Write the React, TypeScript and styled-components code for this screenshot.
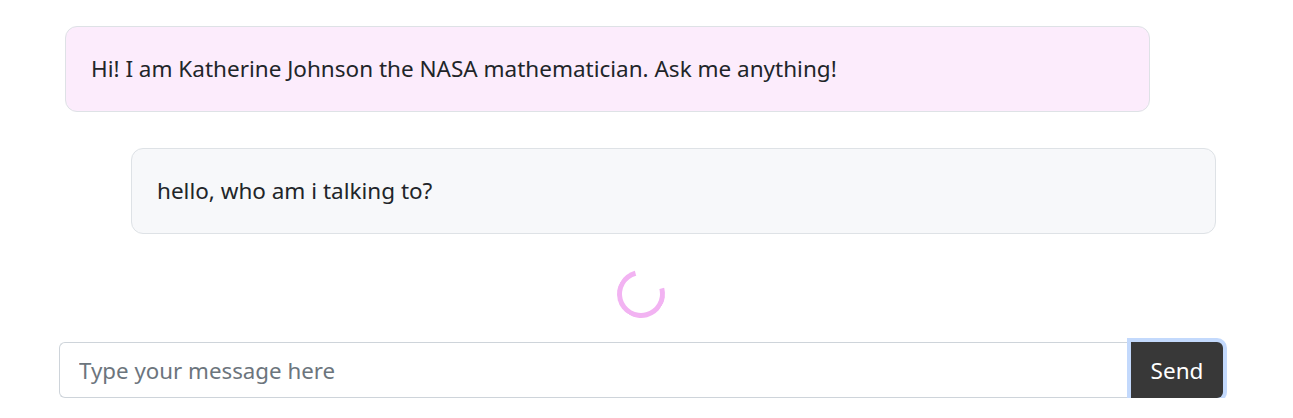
import React from 'react';
import styled, { createGlobalStyle } from 'styled-components';

const GlobalStyle = createGlobalStyle`
  body {
    margin: 0;
    background: #fff;
    font-family: "Noto Sans", "Open Sans", sans-serif;
    color: #212529;
  }
`;

const Page = styled.div`
  width: 1164px;
  margin-left: 59px;
  padding-top: 26px;
  display: flex;
  flex-direction: column;
`;

const Bubble = styled.div<{ $user?: boolean }>`
  width: 1085px;
  box-sizing: border-box;
  margin-left: ${p => (p.$user ? '72px' : '6px')};
  margin-bottom: 36px;
  padding: 25px 25px 25px;
  font-size: 22.5px;
  line-height: 34px;
  border: 1px solid #dee2e6;
  border-radius: 12px;
  background: ${p => (p.$user ? '#f7f8fa' : '#fcecfc')};
`;

const SpinnerRow = styled.div`
  display: flex;
  justify-content: center;
  margin-bottom: 24px;
`;

const Spinner = styled.div`
  width: 48px;
  height: 48px;
  box-sizing: border-box;
  border: 5px solid #f2b3f2;
  border-right-color: transparent;
  border-radius: 50%;
  transform: rotate(-60deg);
`;

const InputGroup = styled.form`
  display: flex;
  align-items: stretch;
  height: 56px;
`;

const MessageInput = styled.input`
  flex: 1;
  box-sizing: border-box;
  border: 1px solid #ced4da;
  border-right: none;
  border-radius: 6px 0 0 6px;
  padding: 0 19px;
  font-family: inherit;
  font-size: 22.3px;
  color: #212529;
  outline: none;
  &::placeholder {
    color: #6c757d;
  }
`;

const SendButton = styled.button`
  width: 92px;
  border: none;
  border-radius: 0 6px 6px 0;
  background: #383838;
  color: #fff;
  font-family: inherit;
  font-size: 22.5px;
  box-shadow: 0 0 0 4px #c3d9fc;
  position: relative;
  z-index: 1;
`;

const App: React.FC = () => {
  return (
    <>
      <GlobalStyle />
      <Page>
        <Bubble>Hi! I am Katherine Johnson the NASA mathematician. Ask me anything!</Bubble>
        <Bubble $user>hello, who am i talking to?</Bubble>
        <SpinnerRow>
          <Spinner />
        </SpinnerRow>
        <InputGroup onSubmit={e => e.preventDefault()}>
          <MessageInput placeholder="Type your message here" />
          <SendButton type="submit">Send</SendButton>
        </InputGroup>
      </Page>
    </>
  );
};

export default App;
